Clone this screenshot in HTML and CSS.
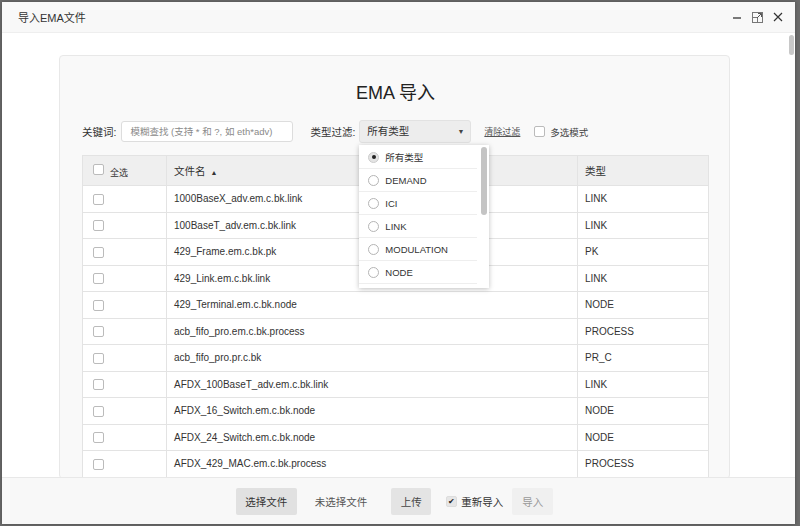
FILE: index.html
```html
<!DOCTYPE html>
<html lang="zh">
<head>
  <meta charset="UTF-8">
  <title>导入EMA文件</title>
  <link rel="stylesheet" href="styles.css">
</head>
<body>
  <div class="dialog">
    <div class="titlebar">
      <span class="title">导入EMA文件</span>
      <div class="win-btns">
        <svg width="10" height="10" viewBox="0 0 10 10"><path d="M1 6h8" stroke="#333" stroke-width="1.3"/></svg>
        <svg width="11" height="11" viewBox="0 0 11 11"><rect x="0.5" y="0.5" width="10" height="10" fill="none" stroke="#777"/><rect x="0.5" y="5.5" width="5" height="5" fill="none" stroke="#777"/><path d="M5 6l4.5-4.5M6 1.5h3.5v3.5" fill="none" stroke="#555"/></svg>
        <svg width="10" height="10" viewBox="0 0 10 10"><path d="M1 1l8 8M9 1l-8 8" stroke="#333" stroke-width="1.2"/></svg>
      </div>
    </div>

    <div class="content">
      <div class="scroll-thumb"></div>
      <div class="card">
        <h2>EMA 导入</h2>

        <div class="filters">
          <label class="lbl">关键词:</label>
          <div class="search">模糊查找 (支持 * 和 ?, 如 eth*adv)</div>
          <label class="lbl type-lbl">类型过滤:</label>
          <div class="select-wrap">
            <div class="select">所有类型<span class="arrow">▼</span></div>
            <ul class="dropdown">
              <li><span class="radio on"></span>所有类型</li>
              <li><span class="radio"></span>DEMAND</li>
              <li><span class="radio"></span>ICI</li>
              <li><span class="radio"></span>LINK</li>
              <li><span class="radio"></span>MODULATION</li>
              <li><span class="radio"></span>NODE</li>
              <div class="dd-thumb"></div>
            </ul>
          </div>
          <a class="clear">清除过滤</a>
          <span class="box"></span>
          <span class="multi">多选模式</span>
        </div>

        <table class="files">
          <thead>
            <tr>
              <th class="c-check"><span class="box head-box"></span><span class="all">全选</span></th>
              <th class="c-name">文件名 <span class="sort">▲</span></th>
              <th class="c-type">类型</th>
            </tr>
          </thead>
          <tbody>
            <tr><td><span class="box"></span></td><td>1000BaseX_adv.em.c.bk.link</td><td>LINK</td></tr>
            <tr><td><span class="box"></span></td><td>100BaseT_adv.em.c.bk.link</td><td>LINK</td></tr>
            <tr><td><span class="box"></span></td><td>429_Frame.em.c.bk.pk</td><td>PK</td></tr>
            <tr><td><span class="box"></span></td><td>429_Link.em.c.bk.link</td><td>LINK</td></tr>
            <tr><td><span class="box"></span></td><td>429_Terminal.em.c.bk.node</td><td>NODE</td></tr>
            <tr><td><span class="box"></span></td><td>acb_fifo_pro.em.c.bk.process</td><td>PROCESS</td></tr>
            <tr><td><span class="box"></span></td><td>acb_fifo_pro.pr.c.bk</td><td>PR_C</td></tr>
            <tr><td><span class="box"></span></td><td>AFDX_100BaseT_adv.em.c.bk.link</td><td>LINK</td></tr>
            <tr><td><span class="box"></span></td><td>AFDX_16_Switch.em.c.bk.node</td><td>NODE</td></tr>
            <tr><td><span class="box"></span></td><td>AFDX_24_Switch.em.c.bk.node</td><td>NODE</td></tr>
            <tr><td><span class="box"></span></td><td>AFDX_429_MAC.em.c.bk.process</td><td>PROCESS</td></tr>
          </tbody>
        </table>
      </div>
    </div>

    <div class="footer">
      <button class="btn pick">选择文件</button>
      <span class="nofile">未选择文件</span>
      <button class="btn upload">上传</button>
      <span class="box checked">✔</span>
      <span class="reimport">重新导入</span>
      <button class="btn import">导入</button>
    </div>
  </div>
</body>
</html>
```

FILE: styles.css
```css
html, body {
  margin: 0;
  height: 100%;
}
body {
  background-color: #6b6b6b;
  font-family: "Liberation Sans", "Noto Sans CJK SC", sans-serif;
  color: #333;
  overflow: hidden;
}
.dialog {
  margin: 2px 5px 0 2px;
  height: 522px;
  background: #fff;
  display: flex;
  flex-direction: column;
  box-shadow: 0 0 4px rgba(0,0,0,0.3);
}
.titlebar {
  height: 31px;
  flex: none;
  background: #f8f8f8;
  border-bottom: 1px solid #eee;
  box-sizing: border-box;
  display: flex;
  align-items: center;
  padding: 0 12px 0 16px;
}
.title {
  font-size: 11px;
  color: #333;
  flex: 1;
}
.win-btns {
  display: flex;
  align-items: center;
  gap: 10px;
}
.content {
  flex: 1;
  position: relative;
  overflow: hidden;
  padding-right: 8px;
}
.scroll-thumb {
  position: absolute;
  right: 1px;
  top: 2px;
  width: 5px;
  height: 20px;
  border-radius: 3px;
  background: #c8c8c8;
}
.card {
  width: 671px;
  margin: 22px auto 0;
  background: #f9f9f9;
  border: 1px solid #e8e8e8;
  border-radius: 4px;
  box-sizing: border-box;
  padding: 25px 20px 0 22px;
}
h2 {
  margin: 0;
  text-align: center;
  font-size: 18px;
  font-weight: normal;
  line-height: 24px;
  color: #222;
}
.filters {
  margin-top: 15px;
  display: flex;
  align-items: center;
  height: 23px;
  font-size: 10.5px;
}
.lbl {
  color: #333;
  margin-right: 5px;
}
.search {
  width: 172px;
  height: 21px;
  box-sizing: border-box;
  border: 1px solid #ddd;
  border-radius: 3px;
  background: #fff;
  color: #8a8a8a;
  font-size: 9.5px;
  line-height: 19px;
  padding-left: 8px;
}
.type-lbl {
  margin-left: 17px;
  margin-right: 4px;
}
.select-wrap {
  position: relative;
}
.select {
  width: 112px;
  height: 23px;
  box-sizing: border-box;
  background: #ededed;
  border: 1px solid #e2e2e2;
  border-radius: 3px;
  padding-left: 7px;
  line-height: 21px;
  font-size: 10.5px;
  position: relative;
}
.arrow {
  position: absolute;
  right: 6px;
  top: 0;
  font-size: 7px;
  color: #444;
}
.dropdown {
  position: absolute;
  left: 0;
  top: 25px;
  width: 130px;
  height: 143px;
  margin: 0;
  padding: 1px 0 0;
  list-style: none;
  background: #fff;
  box-shadow: 0 1px 5px rgba(0,0,0,0.25);
  overflow: hidden;
  box-sizing: border-box;
  z-index: 5;
}
.dropdown li {
  width: 118px;
  height: 23px;
  box-sizing: border-box;
  border-bottom: 1px solid #eee;
  display: flex;
  align-items: center;
  padding-left: 9px;
  font-size: 9.5px;
  color: #333;
}
.radio {
  width: 9px;
  height: 9px;
  border: 1px solid #b5b5b5;
  border-radius: 50%;
  margin-right: 6px;
  box-sizing: content-box;
  position: relative;
  background: #fff;
}
.radio.on {
  background: #e4e4e4;
  border-color: #ccc;
}
.radio.on::after {
  content: "";
  position: absolute;
  left: 2.5px;
  top: 2.5px;
  width: 4px;
  height: 4px;
  border-radius: 50%;
  background: #222;
}
.dd-thumb {
  position: absolute;
  right: 2px;
  top: 2px;
  width: 6px;
  height: 68px;
  border-radius: 3px;
  background: #c4c4c4;
}
.clear {
  margin-left: 13px;
  color: #555;
  text-decoration: underline;
  font-size: 9px;
}
.box {
  display: inline-block;
  width: 9px;
  height: 9px;
  border: 1px solid #bbb;
  border-radius: 2px;
  background: #fff;
  vertical-align: middle;
}
.filters .box {
  margin-left: 14px;
  margin-right: 5px;
}
.multi {
  font-size: 9.5px;
  color: #444;
}
.files {
  width: 100%;
  margin-top: 12px;
  border-collapse: collapse;
  background: #fff;
  font-size: 10px;
  color: #333;
}
.files th, .files td {
  border: 1px solid #e3e3e3;
  text-align: left;
  font-weight: normal;
  padding: 0 0 0 7px;
  height: 25.5px;
}
.files th {
  background: #efefef;
  height: 29px;
  font-size: 10.5px;
}
.files td:first-child {
  padding-left: 10px;
}
.c-check {
  width: 73px;
  padding-left: 10px !important;
}
.c-type {
  width: 123px;
}
.head-box {
  position: relative;
  top: -2px;
}
.all {
  font-size: 9px;
  margin-left: 6px;
  position: relative;
  top: 2px;
}
.sort {
  font-size: 7px;
  margin-left: 2px;
}
.footer {
  height: 47px;
  flex: none;
  background: #f8f8f8;
  border-top: 1px solid #e8e8e8;
  box-sizing: border-box;
  display: flex;
  align-items: center;
  justify-content: center;
  font-size: 10.5px;
  padding-right: 8px;
}
.btn {
  height: 27px;
  border: none;
  border-radius: 2px;
  font-family: inherit;
  font-size: 10.5px;
  color: #333;
  padding: 0;
}
.pick {
  width: 61px;
  background: #e1e1e1;
}
.nofile {
  margin: 0 24px 0 18px;
  color: #555;
}
.upload {
  width: 40px;
  background: #e4e4e4;
  color: #444;
}
.footer .box.checked {
  margin-left: 15px;
  background: #e6e6e6;
  border-color: #ddd;
  font-size: 8px;
  line-height: 9px;
  text-align: center;
  color: #222;
}
.reimport {
  margin-left: 4px;
  color: #333;
}
.import {
  margin-left: 9px;
  width: 41px;
  background: #f0f0f0;
  color: #999;
}
```
